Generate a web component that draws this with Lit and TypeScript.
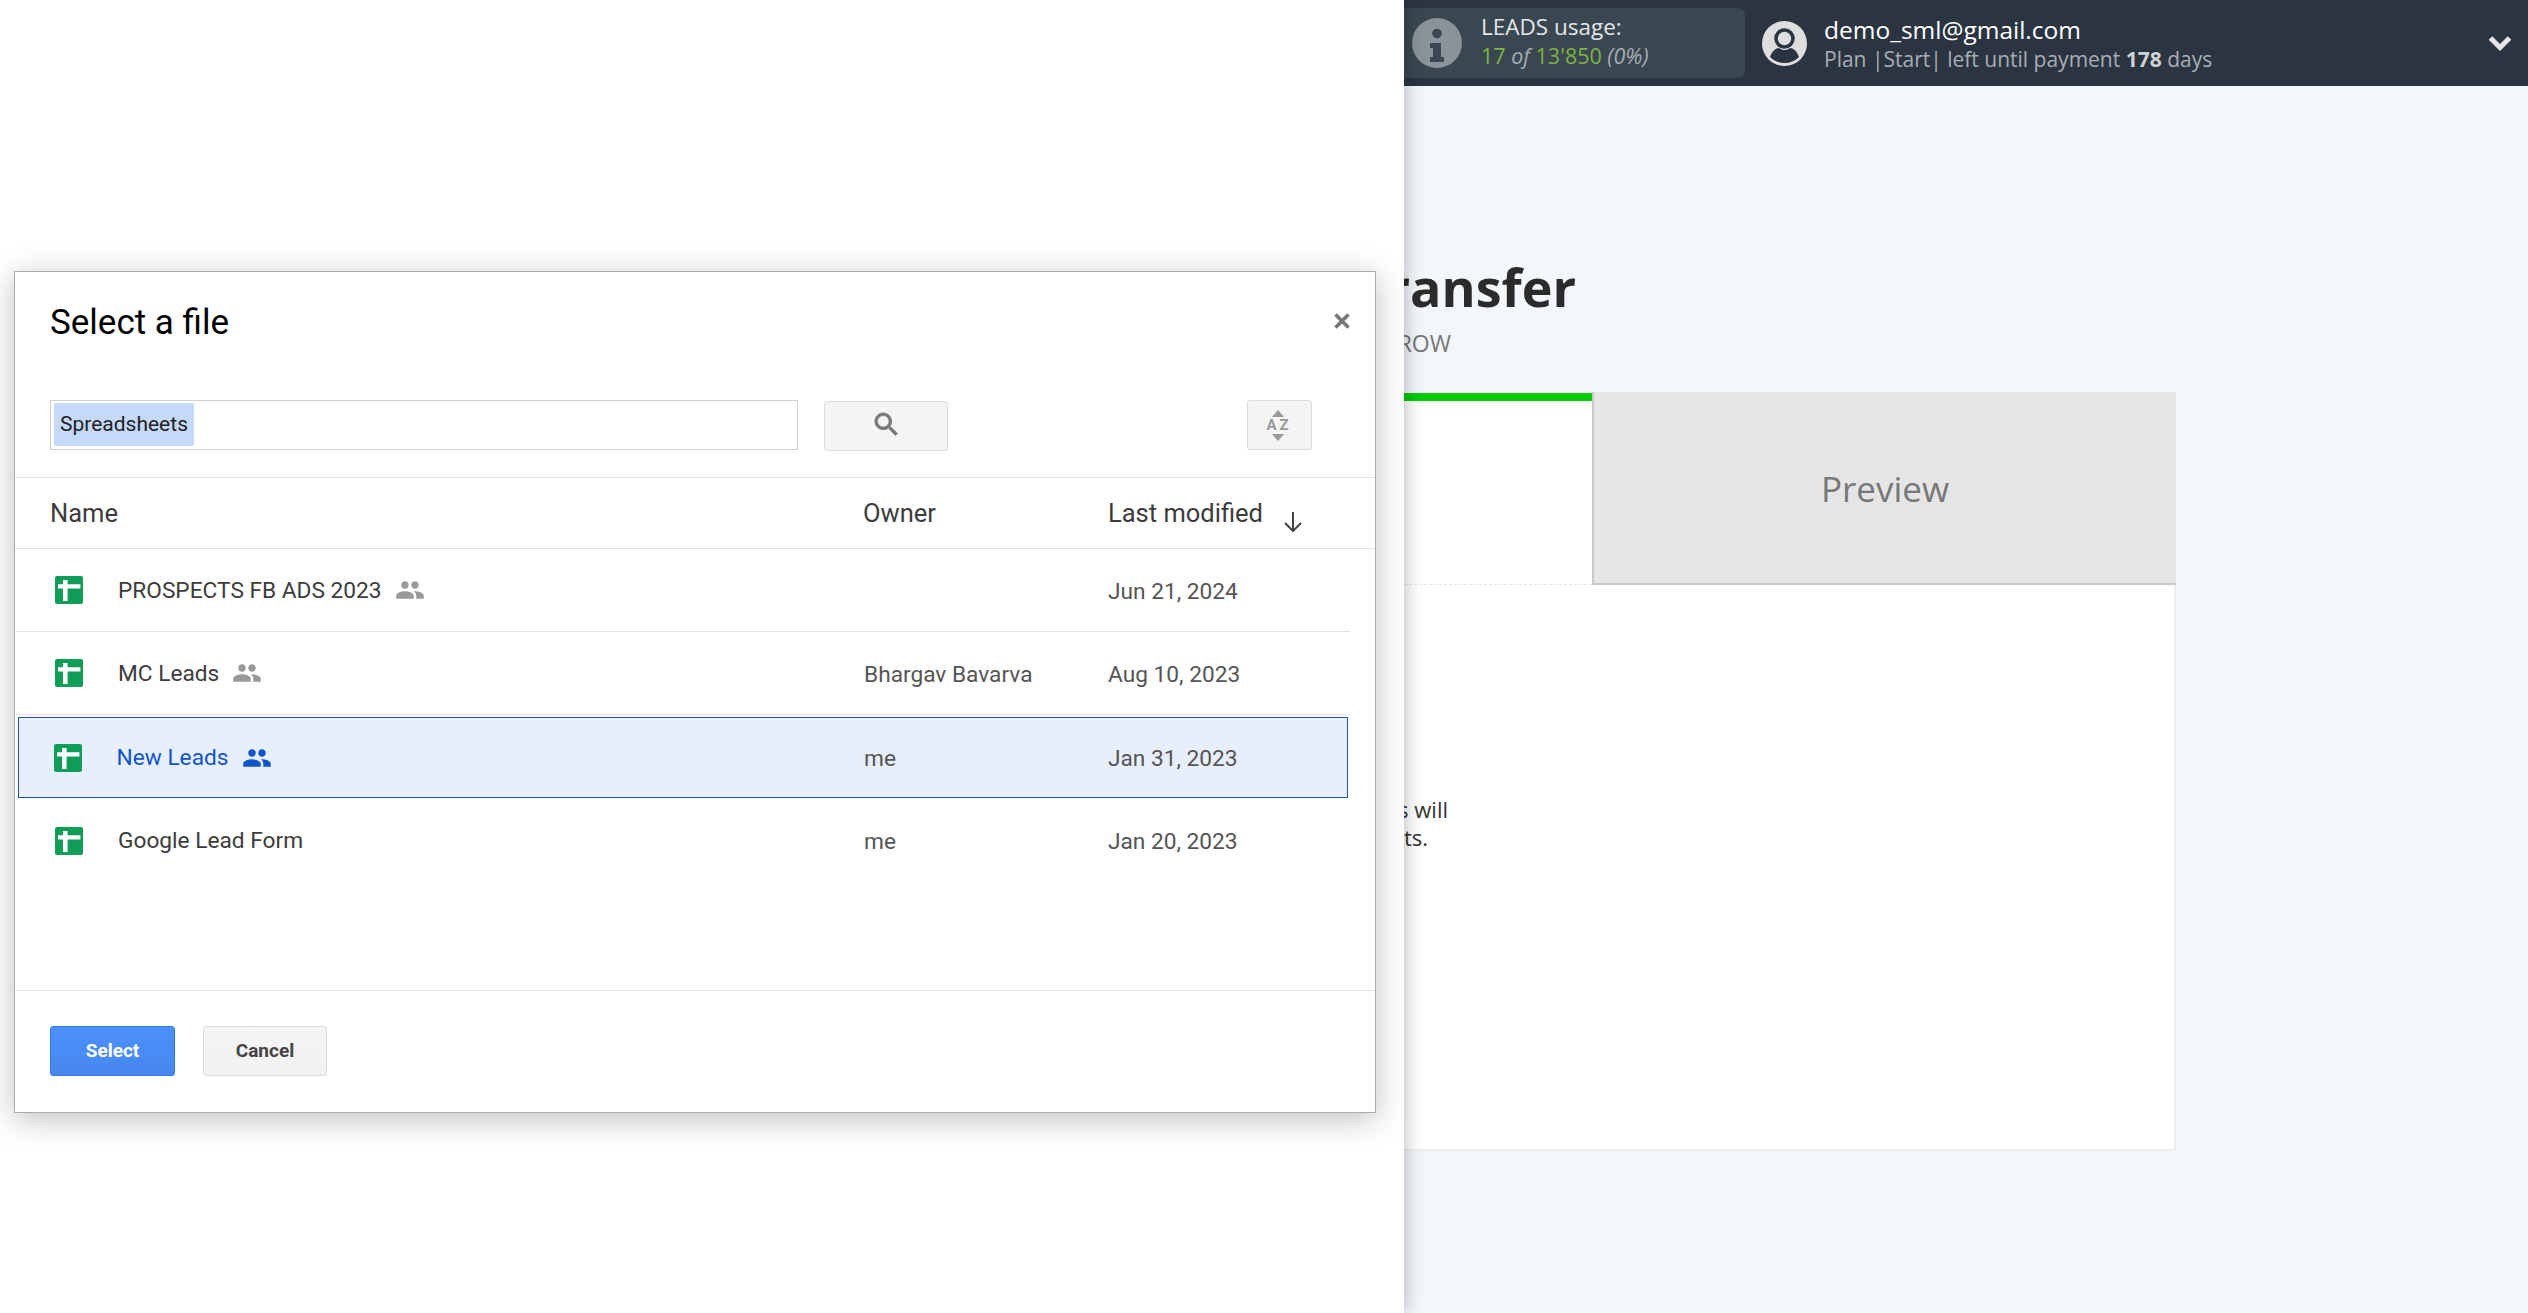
import { LitElement, html, css } from "lit";
import { customElement } from "lit/decorators.js";

const GROUP =
  "M16 11c1.66 0 2.99-1.34 2.99-3S17.66 5 16 5c-1.66 0-3 1.34-3 3s1.34 3 3 3zm-8 0c1.66 0 2.99-1.34 2.99-3S9.66 5 8 5C6.34 5 5 6.34 5 8s1.34 3 3 3zm0 2c-2.33 0-7 1.17-7 3.5V19h14v-2.5c0-2.33-4.67-3.5-7-3.5zm8 0c-.29 0-.62.02-.97.05 1.16.84 1.97 1.97 1.97 3.45V19h6v-2.5c0-2.33-4.67-3.5-7-3.5z";
const SEARCH =
  "M15.5 14h-.79l-.28-.27C15.41 12.59 16 11.11 16 9.5 16 5.91 13.09 3 9.5 3S3 5.91 3 9.5 5.91 16 9.5 16c1.61 0 3.09-.59 4.23-1.57l.27.28v.79l5 4.99L20.49 19l-4.99-5zm-6 0C7.01 14 5 11.99 5 9.5S7.01 5 9.5 5 14 7.01 14 9.5 11.99 14 9.5 14z";

interface FileRow {
  name: string;
  shared: boolean;
  owner: string;
  date: string;
  selected?: boolean;
}

const FILES: FileRow[] = [
  { name: "PROSPECTS FB ADS 2023", shared: true, owner: "", date: "Jun 21, 2024" },
  { name: "MC Leads", shared: true, owner: "Bhargav Bavarva", date: "Aug 10, 2023" },
  { name: "New Leads", shared: true, owner: "me", date: "Jan 31, 2023", selected: true },
  { name: "Google Lead Form", shared: false, owner: "me", date: "Jan 20, 2023" },
];

@customElement("app-root")
export class AppRoot extends LitElement {
  static styles = css`
    :host {
      display: flex;
      width: 2528px;
      height: 1313px;
      overflow: hidden;
      background: #f3f6fb;
      font-family: "Open Sans", sans-serif;
      color: #333;
    }
    .left {
      position: relative;
      z-index: 2;
      flex: 0 0 1404px;
      box-sizing: border-box;
      padding: 271px 0 0 14px;
      background: #fff;
      box-shadow: 0 0 18px rgba(0, 0, 0, 0.3);
    }
    .dialog {
      box-sizing: border-box;
      width: 1362px;
      height: 842px;
      display: flex;
      flex-direction: column;
      background: #fff;
      border: 1px solid #acacac;
      box-shadow: 0 6px 30px rgba(0, 0, 0, 0.25);
      font-family: Roboto, sans-serif;
    }
    .head {
      height: 128px;
      flex: none;
      box-sizing: border-box;
      display: flex;
      justify-content: space-between;
      padding: 30px 25px 0 35px;
    }
    .title {
      font-size: 35px;
      line-height: 42px;
      color: #000;
    }
    .close {
      width: 16px;
      height: 16px;
      margin-top: 11px;
    }
    .toolbar {
      height: 78px;
      flex: none;
      box-sizing: border-box;
      display: flex;
      align-items: flex-start;
      padding: 0 63px 0 35px;
      border-bottom: 1px solid #e3e3e3;
    }
    .input {
      box-sizing: border-box;
      width: 748px;
      height: 50px;
      border: 1px solid #d0d0d0;
      padding: 2px 3px;
      display: flex;
    }
    .chip {
      box-sizing: border-box;
      height: 43px;
      width: 140px;
      padding-left: 6px;
      background: #c5d9fb;
      border-radius: 2px;
      font-size: 21px;
      line-height: 42px;
      color: #222;
    }
    .btn-search {
      box-sizing: border-box;
      width: 124px;
      height: 50px;
      margin: 1px 0 0 26px;
      padding-bottom: 4px;
      background: #f4f4f4;
      border: 1px solid #dcdcdc;
      border-radius: 3px;
      display: flex;
      align-items: center;
      justify-content: center;
    }
    .btn-sort {
      box-sizing: border-box;
      width: 65px;
      height: 50px;
      margin-left: auto;
      background: #f4f4f4;
      border: 1px solid #dcdcdc;
      border-radius: 3px;
      display: flex;
      flex-direction: column;
      align-items: center;
      justify-content: center;
      gap: 2px;
      color: #999;
      padding-right: 4px;
    }
    .az {
      font-size: 15px;
      line-height: 13px;
      font-weight: 700;
      letter-spacing: 3px;
      margin-right: -3px;
    }
    .tri {
      display: block;
      width: 12px;
      height: 7px;
    }
    .cols {
      height: 71px;
      flex: none;
      box-sizing: border-box;
      display: grid;
      grid-template-columns: 813px 245px 1fr;
      align-items: center;
      padding-left: 35px;
      border-bottom: 1px solid #e0e0e0;
      font-size: 25.5px;
      color: #3c3c3c;
    }
    .sorted {
      display: flex;
      align-items: center;
      gap: 20px;
    }
    .arrow {
      width: 20px;
      height: 20px;
      margin-top: 18px;
    }
    .list {
      flex: 1;
      display: flex;
      flex-direction: column;
      padding: 0 25px 0 1px;
    }
    .row {
      box-sizing: border-box;
      height: 83px;
      flex: none;
      display: grid;
      grid-template-columns: 848px 244px 1fr;
      align-items: center;
      border-bottom: 1px solid #e0e0e0;
      font-size: 22.7px;
      color: #555;
    }
    .row.plain {
      border-bottom: none;
    }
    .row.sel {
      height: 81px;
      margin: 2px 2px 1px 2px;
      grid-template-columns: 845px 244px 1fr;
      border: 1px solid #1a56b8;
      background: #e8effc;
    }
    .name {
      display: flex;
      align-items: center;
      padding-left: 39px;
      color: #3c3c3c;
    }
    .sel .name {
      padding-left: 35px;
      color: #1155cc;
    }
    .date {
      padding-top: 2px;
    }
    .sheet {
      width: 28px;
      height: 28px;
      margin-right: 35px;
      flex: none;
    }
    .sel .sheet {
      margin-right: 34.5px;
    }
    .group {
      width: 30px;
      height: 30px;
      margin-left: 13px;
      flex: none;
      fill: #999;
    }
    .sel .group {
      fill: #1155cc;
    }
    .foot {
      height: 122px;
      flex: none;
      box-sizing: border-box;
      display: flex;
      align-items: flex-start;
      gap: 28px;
      padding: 35px 0 0 35px;
      border-top: 1px solid #e3e3e3;
    }
    .action {
      box-sizing: border-box;
      height: 50px;
      padding-bottom: 1px;
      border-radius: 3px;
      display: flex;
      align-items: center;
      justify-content: center;
      font-size: 19px;
      font-weight: 700;
    }
    .primary {
      width: 125px;
      color: #fff;
      background: linear-gradient(#4d90fe, #4787ed);
      border: 1px solid #3079ed;
    }
    .secondary {
      width: 124px;
      color: #444;
      background: linear-gradient(#f5f5f5, #f1f1f1);
      border: 1px solid #dcdcdc;
    }
    .main {
      flex: 1;
      min-width: 0;
      overflow: hidden;
      display: flex;
      flex-direction: column;
    }
    .bar {
      height: 86px;
      flex: none;
      display: flex;
      align-items: center;
      background: #2b3542;
    }
    .leads {
      box-sizing: border-box;
      width: 341px;
      height: 70px;
      margin-right: 17px;
      padding-left: 8px;
      display: flex;
      align-items: center;
      gap: 19px;
      background: #3a4750;
      border-radius: 0 8px 8px 0;
    }
    .info {
      width: 50px;
      height: 50px;
      flex: none;
    }
    .lines {
      display: flex;
      flex-direction: column;
      margin-bottom: 5px;
      font-size: 22.5px;
      line-height: 29px;
      white-space: nowrap;
    }
    .leads .top {
      color: #e3e6e8;
    }
    .leads .sub {
      color: #a5adb3;
      font-size: 21.5px;
      font-style: italic;
    }
    .green {
      color: #7cb342;
      font-style: normal;
    }
    .user {
      width: 45px;
      height: 45px;
      flex: none;
      margin-right: 17px;
    }
    .acct {
      display: flex;
      flex-direction: column;
      white-space: nowrap;
    }
    .mail {
      font-size: 24.5px;
      line-height: 32px;
      color: #fff;
    }
    .plan {
      font-size: 21px;
      line-height: 26px;
      color: #a7adb3;
    }
    .plan b {
      color: #d0d3d6;
    }
    .chev {
      width: 24px;
      height: 16px;
      margin: 0 16px 0 auto;
      flex: none;
    }
    .clipped {
      display: flex;
      justify-content: flex-end;
      white-space: nowrap;
    }
    .h1 {
      width: 172px;
      margin-top: 171px;
      font-size: 52px;
      line-height: 60px;
      font-weight: 700;
      color: #2b2b2b;
    }
    .crumb {
      width: 47px;
      margin-top: 11px;
      font-size: 23px;
      line-height: 30px;
      color: #777;
    }
    .tabs {
      display: flex;
      width: 772px;
      height: 193px;
      margin-top: 34px;
      flex: none;
    }
    .tab-on {
      box-sizing: border-box;
      flex: 0 0 188px;
      margin-top: 1px;
      background: #fff;
      border-top: 8px solid #00cc00;
      border-bottom: 1px dashed #e6e6e6;
    }
    .tab-off {
      box-sizing: border-box;
      flex: 1;
      padding-top: 2px;
      background: #e5e5e5;
      border-left: 2px solid #c9c9c9;
      border-bottom: 2px solid #c9c9c9;
      display: flex;
      align-items: center;
      justify-content: center;
      font-size: 35px;
      color: #777;
    }
    .panel {
      box-sizing: border-box;
      width: 772px;
      height: 566px;
      padding-top: 210px;
      background: #fff;
      border-right: 2px solid #ececec;
      border-bottom: 2px solid #ececec;
      font-size: 22px;
      line-height: 28px;
      color: #333;
    }
    .t1 {
      width: 44px;
    }
    .t2 {
      width: 24px;
    }
  `;

  private sheet() {
    return html`<svg class="sheet" viewBox="0 0 28 28">
      <rect width="28" height="28" rx="2" fill="#0f9d58"></rect>
      <path d="M8 4h4.600v4.200H25.400v4.400H12.600V25H8V12.600H3V8.200h5z" fill="#fff"></path>
    </svg>`;
  }

  private row(f: FileRow, i: number) {
    const last = i === FILES.length - 1;
    const cls = f.selected ? "row sel" : last ? "row plain" : "row";
    return html`<div class=${cls}>
      <div class="name">
        ${this.sheet()}<span>${f.name}</span>
        ${f.shared
          ? html`<svg class="group" viewBox="0 0 24 24"><path d=${GROUP}></path></svg>`
          : ""}
      </div>
      <div class="date">${f.owner}</div>
      <div class="date">${f.date}</div>
    </div>`;
  }

  render() {
    return html`
      <div class="left">
        <div class="dialog">
          <div class="head">
            <div class="title">Select a file</div>
            <svg class="close" viewBox="0 0 16 16">
              <path d="M1.500 1.500l13 13M14.500 1.500l-13 13" stroke="#777" stroke-width="3.6" fill="none"></path>
            </svg>
          </div>
          <div class="toolbar">
            <div class="input"><div class="chip">Spreadsheets</div></div>
            <div class="btn-search">
              <svg width="31" height="31" viewBox="0 0 24 24">
                <path d=${SEARCH} fill="#777" stroke="#777" stroke-width=".6"></path>
              </svg>
            </div>
            <div class="btn-sort">
              <svg class="tri" viewBox="0 0 12 7"><path d="M6 0l6 7H0z" fill="#999"></path></svg>
              <div class="az">AZ</div>
              <svg class="tri" viewBox="0 0 12 7"><path d="M0 0h12L6 7z" fill="#999"></path></svg>
            </div>
          </div>
          <div class="cols">
            <div>Name</div>
            <div>Owner</div>
            <div class="sorted">
              <span>Last modified</span>
              <svg class="arrow" viewBox="0 0 20 20">
                <path d="M10 0v19M2 11l8 8 8-8" stroke="#444" stroke-width="2" fill="none"></path>
              </svg>
            </div>
          </div>
          <div class="list">${FILES.map((f, i) => this.row(f, i))}</div>
          <div class="foot">
            <div class="action primary">Select</div>
            <div class="action secondary">Cancel</div>
          </div>
        </div>
      </div>
      <div class="main">
        <div class="bar">
          <div class="leads">
            <svg class="info" viewBox="0 0 50 50">
              <circle cx="25" cy="25" r="25" fill="#8a9399"></circle>
              <circle cx="25" cy="15.5" r="4.800" fill="#3a4750"></circle>
              <path d="M18 25h11v14h3v5H18v-5h3v-9h-3z" fill="#3a4750"></path>
            </svg>
            <div class="lines">
              <span class="top">LEADS usage:</span>
              <span class="sub"><span class="green">17</span> of <span class="green">13'850</span> (0%)</span>
            </div>
          </div>
          <svg class="user" viewBox="0 0 45 45">
            <circle cx="22.500" cy="22.500" r="22.500" fill="#dedede"></circle>
            <circle cx="22.500" cy="17.500" r="8.500" fill="none" stroke="#2b3542" stroke-width="3.600"></circle>
            <path d="M8 36c2-6 6-9 9-9 2 1.600 3.500 2 5.500 2s3.500-.4 5.500-2c3 0 7 3 9 9-4 4-9 6-14.500 6S12 40 8 36z" fill="#2b3542"></path>
          </svg>
          <div class="acct">
            <span class="mail">demo_sml@gmail.com</span>
            <span class="plan">Plan |Start| left until payment <b>178</b> days</span>
          </div>
          <svg class="chev" viewBox="0 0 24 16">
            <path d="M2.500 3l9.500 9.500L21.500 3" stroke="#e6e6e6" stroke-width="5" fill="none"></path>
          </svg>
        </div>
        <div class="clipped h1">transfer</div>
        <div class="clipped crumb">ROW</div>
        <div class="tabs">
          <div class="tab-on"></div>
          <div class="tab-off">Preview</div>
        </div>
        <div class="panel">
          <div class="clipped t1">s will</div>
          <div class="clipped t2">ts.</div>
        </div>
      </div>
    `;
  }
}
